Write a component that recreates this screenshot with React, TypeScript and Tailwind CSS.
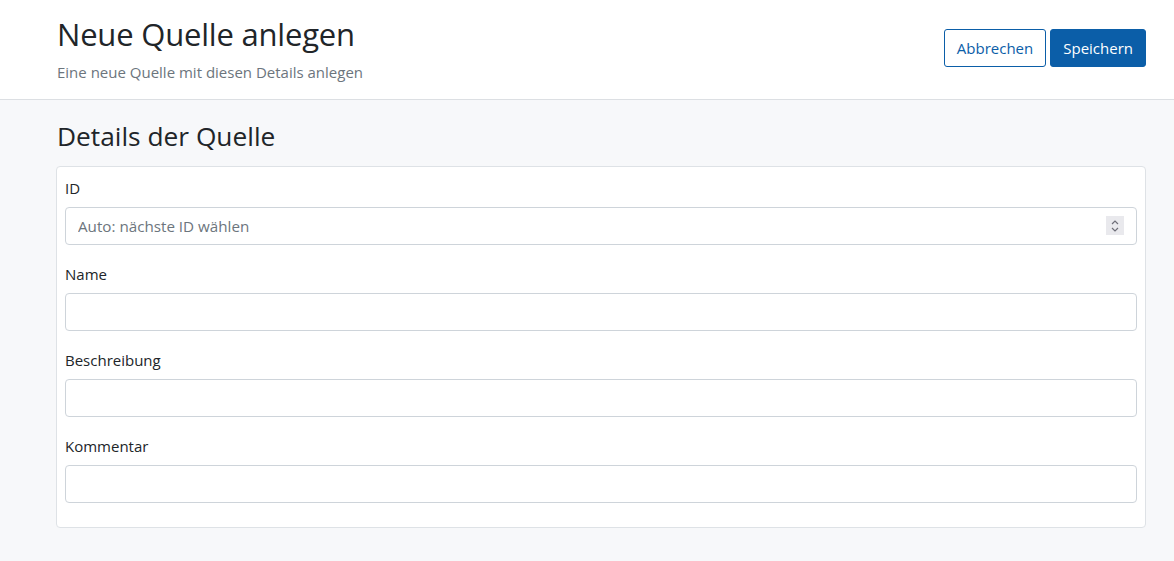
import React from "react";

const FONT = { fontFamily: '"Open Sans", "Noto Sans", Arial, sans-serif' };

interface Field {
    label: string;
    placeholder?: string;
    spinner?: boolean;
}

const FIELDS: Field[] = [
    { label: "ID", placeholder: "Auto: nächste ID wählen", spinner: true },
    { label: "Name" },
    { label: "Beschreibung" },
    { label: "Kommentar" },
];

export default function App() {
    return (
        <div className="min-h-[561px] bg-[#f7f8fa] text-[#212529]" style={FONT}>
            {/* Header */}
            <header className="bg-white border-b border-[#dcdfe3] h-[100px] pl-[57px] pr-[28px] flex items-start justify-between">
                <div className="pt-[15px]">
                    <h1 className="text-[31px] leading-[38px] font-normal tracking-[-0.2px]">Neue Quelle anlegen</h1>
                    <p className="text-[15px] leading-[20px] mt-[9px] text-[#6c757d]">
                        Eine neue Quelle mit diesen Details anlegen
                    </p>
                </div>
                <div className="flex gap-[4px] pt-[29px]">
                    <button className="h-[38px] px-[12px] rounded-[3px] border border-[#0b5ea8] bg-white text-[#0b5ea8] text-[15px]">
                        Abbrechen
                    </button>
                    <button className="h-[38px] px-[12px] rounded-[3px] border border-[#0b5ea8] bg-[#0b5ea8] text-white text-[15px]">
                        Speichern
                    </button>
                </div>
            </header>

            {/* Body */}
            <main className="pl-[56px] pr-[28px] pt-[19px]">
                <h2 className="text-[26.3px] leading-[34px] font-normal ml-[1px] mb-[13px]">Details der Quelle</h2>
                <div className="bg-white border border-[#dee2e6] rounded-[4px] px-[8px] pt-[9px] pb-[24px] flex flex-col gap-[17px]">
                    {FIELDS.map((f) => (
                        <div key={f.label}>
                            <label className="block text-[15px] leading-[24px] mb-[7px]">{f.label}</label>
                            <div className="relative">
                                <input
                                    type="text"
                                    placeholder={f.placeholder}
                                    className="w-full h-[38px] rounded-[4px] border border-[#ced4da] bg-white px-[12px] text-[15.2px] placeholder:text-[#6c757d] outline-none"
                                />
                                {f.spinner && (
                                    <div className="absolute right-[13px] top-[9px] w-[18px] h-[19px] bg-[#e9e9ed] flex items-center justify-center">
                                        <svg width="10" height="14" viewBox="0 0 10 14" fill="none" stroke="#6e6e78" strokeWidth="1.2">
                                            <path d="M2 5l3-3 3 3" />
                                            <path d="M2 9l3 3 3-3" />
                                        </svg>
                                    </div>
                                )}
                            </div>
                        </div>
                    ))}
                </div>
            </main>
        </div>
    );
}
